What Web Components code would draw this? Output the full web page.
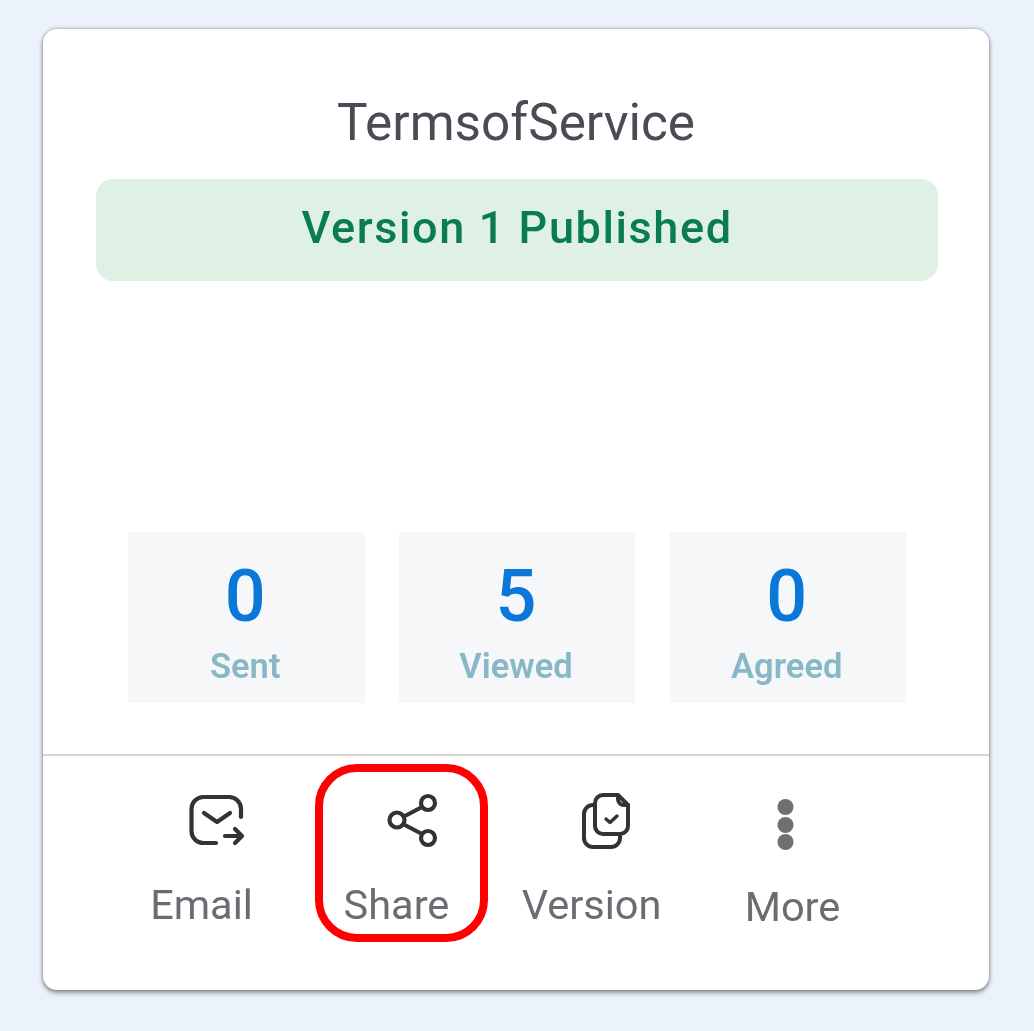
<!DOCTYPE html>
<html>
<head>
<meta charset="utf-8">
<title>Terms of Service</title>
<style>
  html, body { margin: 0; height: 100%; }
  body {
    background: #ebf2fb;
    font-family: Roboto, sans-serif;
    overflow: hidden;
  }
</style>
</head>
<body>
<doc-card name="TermsofService" status="Version 1 Published">
  <stat-box slot="stats" value="0" label="Sent"></stat-box>
  <stat-box slot="stats" value="5" label="Viewed"></stat-box>
  <stat-box slot="stats" value="0" label="Agreed"></stat-box>

  <card-action slot="actions" label="Email" style="--w:195px; --ix:15px; --iy:-1px">
    <svg width="60" height="60" viewBox="0 0 60 60" fill="none" stroke="#333" stroke-width="4.2" stroke-linecap="round" stroke-linejoin="round">
      <path d="M29 52H17A12 12 0 0 1 4.5 40V18A12 12 0 0 1 17 6h25a12 12 0 0 1 12 12v8"/>
      <path d="M17 22l13 9 13-9"/>
      <path d="M38 45h17M48 38l7 7-7 7"/>
    </svg>
  </card-action>
  <card-action slot="actions" label="Share" style="--w:195px; --ix:16px; --iy:-2px">
    <svg width="60" height="60" viewBox="0 0 60 60" fill="none" stroke="#333" stroke-width="4.2">
      <circle cx="45" cy="13" r="7"/>
      <circle cx="14" cy="30" r="7.5"/>
      <circle cx="45" cy="48" r="7"/>
      <path d="M20 27l19-10M20 34l19 10"/>
    </svg>
  </card-action>
  <card-action slot="actions" label="Version" style="--w:195px; --ix:14px; --iy:-3px">
    <svg width="60" height="60" viewBox="0 0 60 60" fill="none" stroke="#333" stroke-width="4" stroke-linecap="round" stroke-linejoin="round">
      <path d="M17 16a9 9 0 0 0-9 9v24a9 9 0 0 0 9 9h18a9 9 0 0 0 9-9v-3"/>
      <path d="M27 6h15l10 10v21a8 8 0 0 1-8 8H27a8 8 0 0 1-8-8V14a8 8 0 0 1 8-8z"/>
      <path d="M42 7v3a6 6 0 0 0 6 6h4"/>
      <path d="M30 30l4 3.5L41 27" stroke-width="3.4"/>
    </svg>
  </card-action>
  <card-action slot="actions" label="More" class="more" style="--w:207px; --ix:-7.5px; --iy:-2px">
    <svg width="60" height="60" viewBox="0 0 60 60" fill="#707070">
      <circle cx="30" cy="17" r="8"/>
      <circle cx="30" cy="35" r="8"/>
      <circle cx="30" cy="52" r="8"/>
    </svg>
  </card-action>
</doc-card>

<script>
class StatBox extends HTMLElement {
    constructor() {
        super();
        const root = this.attachShadow({ mode: 'open' });
        root.innerHTML = `
        <style>
          :host {
              display: flex;
              flex-direction: column;
              align-items: center;
              box-sizing: border-box;
              width: 236.5px;
              height: 171px;
              padding: 27px 2px 0 0;
              background: #f5f7f9;
          }
          #value {
              font-size: 72px;
              line-height: 75px;
              font-weight: 500;
              color: #0a78d9;
          }
          #label {
              font-size: 34.5px;
              line-height: 37px;
              margin-top: 14px;
              font-weight: 600;
              color: #88b7c7;
          }
        </style>
        <div id="value">${this.getAttribute('value')}</div>
        <div id="label">${this.getAttribute('label')}</div>
        `;
    }
}

class CardAction extends HTMLElement {
    constructor() {
        super();
        const root = this.attachShadow({ mode: 'open' });
        root.innerHTML = `
        <style>
          :host {
              display: flex;
              flex-direction: column;
              align-items: center;
              flex: none;
              width: var(--w);
              color: #6f6a72;
          }
          #icon {
              display: flex;
              height: 60px;
              margin-top: 36px;
              transform: translate(var(--ix), var(--iy));
          }
          #label {
              font-size: 41.5px;
              line-height: 44px;
              margin-top: 31px;
          }
          :host(.more) #label { margin-top: 33px; }
        </style>
        <div id="icon"><slot></slot></div>
        <div id="label">${this.getAttribute('label')}</div>
        `;
    }
}

class DocCard extends HTMLElement {
    constructor() {
        super();
        const root = this.attachShadow({ mode: 'open' });
        root.innerHTML = `
        <style>
          :host {
              display: flex;
              flex-direction: column;
              position: absolute;
              left: 43px;
              top: 29px;
              box-sizing: border-box;
              width: 946px;
              height: 961px;
              background: #fff;
              border-radius: 14px;
              box-shadow: 0 0 3px 1px rgba(70,70,70,.3), 0 3px 4px rgba(70,70,70,.5);
              filter: blur(.6px);
          }
          #title {
              margin-top: 66px;
              text-align: center;
              font-size: 51.3px;
              line-height: 56px;
              color: #4b4b55;
          }
          #status {
              margin: 28px 51px 0 53px;
              height: 102px;
              box-sizing: border-box;
              padding-bottom: 6px;
              display: flex;
              align-items: center;
              justify-content: center;
              border-radius: 17px;
              background: #dff0e4;
              color: #097c50;
              font-size: 45px;
              font-weight: 500;
              letter-spacing: 1.6px;
          }
          #stats {
              display: flex;
              justify-content: space-between;
              margin: 251px 83px 0 85px;
          }
          #divider {
              margin-top: 51px;
              height: 2px;
              background: #d5d5d5;
          }
          #actions {
              display: flex;
              padding-left: 61px;
              position: relative;
          }
          #mark {
              position: absolute;
              left: 272px;
              top: 8px;
              width: 173px;
              height: 178px;
              box-sizing: border-box;
              border: 8px solid #f00;
              border-radius: 42px;
          }
        </style>
        <div id="title">${this.getAttribute('name')}</div>
        <div id="status">${this.getAttribute('status')}</div>
        <div id="stats"><slot name="stats"></slot></div>
        <div id="divider"></div>
        <div id="actions"><slot name="actions"></slot><div id="mark"></div></div>
        `;
    }
}

customElements.define('stat-box', StatBox);
customElements.define('card-action', CardAction);
customElements.define('doc-card', DocCard);
</script>
</body>
</html>
